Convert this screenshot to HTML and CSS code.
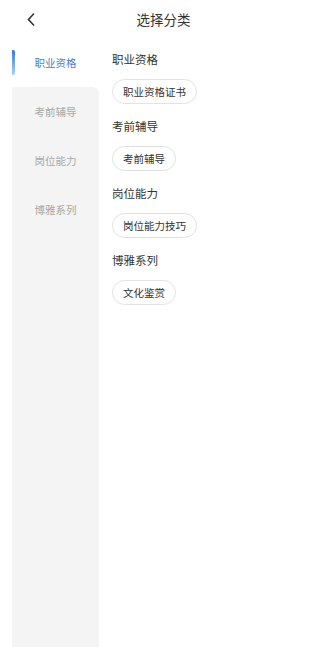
FILE: index.html
```html
<!DOCTYPE html>
<html lang="zh">
  <head>
    <meta charset="UTF-8" />
    <meta name="viewport" content="width=device-width, initial-scale=1.0" />
    <title>选择分类</title>
    <link rel="stylesheet" href="styles.css">
  </head>
  <body>
    <div class="header">
      <span class="back">
        <svg width="10" height="15" viewBox="0 0 10 15">
          <path d="M8 1.5 L2.5 7.5 L8 13.5" fill="none" stroke="#333" stroke-width="1.6" />
        </svg>
      </span>
      <div class="title">选择分类</div>
    </div>

    <div class="main">
      <div class="sidebar">
        <div class="side-item active">职业资格</div>
        <div class="side-item after-active">考前辅导</div>
        <div class="side-item">岗位能力</div>
        <div class="side-item">博雅系列</div>
        <div class="side-fill"></div>
      </div>

      <div class="content">
        <div class="group">
          <div class="group-title">职业资格</div>
          <div class="tags"><span class="tag">职业资格证书</span></div>
        </div>
        <div class="group">
          <div class="group-title">考前辅导</div>
          <div class="tags"><span class="tag">考前辅导</span></div>
        </div>
        <div class="group">
          <div class="group-title">岗位能力</div>
          <div class="tags"><span class="tag">岗位能力技巧</span></div>
        </div>
        <div class="group">
          <div class="group-title">博雅系列</div>
          <div class="tags"><span class="tag">文化鉴赏</span></div>
        </div>
      </div>
    </div>
  </body>
</html>
```

FILE: styles.css
```css
body {
  margin: 0;
  height: 647px;
  display: flex;
  flex-direction: column;
  background-color: #fff;
  font-family: "Noto Sans CJK SC", "Noto Sans", sans-serif;
  color: #333;
}

.header {
  height: 38px;
  display: flex;
  align-items: center;
  justify-content: center;
  position: relative;
}

.back {
  position: absolute;
  left: 26px;
  top: 12px;
  display: flex;
}

.title {
  font-size: 13.5px;
  color: #333;
  margin-top: -1px;
}

.main {
  flex: 1;
  display: flex;
}

.sidebar {
  width: 87px;
  margin-left: 12px;
  display: flex;
  flex-direction: column;
}

.side-item {
  height: 49px;
  display: flex;
  align-items: center;
  justify-content: center;
  font-size: 10.5px;
  color: #a8a8a8;
  background-color: #f4f4f4;
  position: relative;
}

.side-item.active {
  background-color: #fff;
  color: #4a7fc4;
}

.side-item.active::before {
  content: "";
  position: absolute;
  left: 0;
  top: 12px;
  width: 3px;
  height: 25px;
  border-radius: 0 2px 2px 0;
  background: linear-gradient(#3478e0, #a9d2fa);
}

.side-item.after-active {
  border-top-right-radius: 7px;
}

.side-fill {
  flex: 1;
  background-color: #f4f4f4;
}

.content {
  flex: 1;
  padding-left: 13px;
  padding-top: 11px;
}

.group {
  margin-bottom: 12px;
}

.group-title {
  font-size: 11.5px;
  color: #333;
  line-height: 20px;
}

.tags {
  margin-top: 10px;
  display: flex;
}

.tag {
  height: 23px;
  padding: 0 10px;
  border: 1px solid #e2e2e2;
  border-radius: 13px;
  font-size: 10.5px;
  color: #333;
  display: flex;
  align-items: center;
}
```
